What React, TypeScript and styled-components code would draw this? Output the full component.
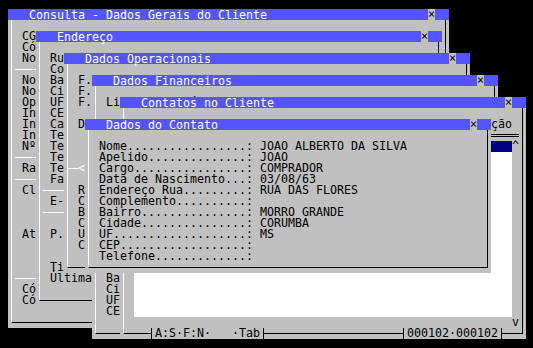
import * as React from "react";
import styled, { createGlobalStyle } from "styled-components";

// text-mode screen: every cell is 7px wide and 11px tall
const GlobalStyle = createGlobalStyle`
  *, *::before, *::after {
    box-sizing: border-box;
  }
  html, body {
    margin: 0;
    padding: 0;
    background: #000;
  }
`;

const Screen = styled.div`
  position: relative;
  width: 533px;
  height: 348px;
  overflow: hidden;
  background: #000;
  color: #000;
  font: 11.63px/11px "DejaVu Sans Mono", "Liberation Mono", monospace;
  white-space: pre;
`;

const WindowBox = styled.div<{ $col: number; $row: number; $cols: number; $rows: number }>`
  position: absolute;
  left: ${(p) => 8 + p.$col * 7}px;
  top: ${(p) => 9 + p.$row * 11}px;
  width: ${(p) => p.$cols * 7}px;
  height: ${(p) => p.$rows * 11}px;
  display: flex;
  flex-direction: column;
  overflow: hidden;
  background: #c0c0c0;
`;

const TitleBar = styled.div`
  display: flex;
  flex: none;
  height: 11px;
  padding: 0 14px 0 21px;
  background: #5555ff;
  color: #fff;
`;

const TitleText = styled.div`
  flex: 1;
  height: 11px;
  padding-top: 1px;
`;

const CloseBox = styled.div`
  width: 7px;
  background: #c0c0c0;
  color: #000;
  text-align: center;
`;

const Body = styled.div`
  flex: 1;
  display: flex;
  flex-direction: column;
  padding: 0 3px 5px;
`;

const Frame = styled.div`
  flex: 1;
  display: flex;
  flex-direction: column;
  padding-left: 3px;
  border-left: 1px solid #fff;
  border-right: 1px solid #000;
  border-bottom: 1px solid #000;
`;

const Line = styled.div<{ $indent?: number }>`
  flex: none;
  height: 11px;
  padding-left: ${(p) => (p.$indent ?? 1) * 7}px;
`;

const Gap = styled.div<{ $rows: number }>`
  flex: none;
  height: ${(p) => p.$rows * 11}px;
`;

const Rule = styled.div`
  flex: none;
  height: 11px;
  background: linear-gradient(#fff, #fff) 0 5px / 100% 1px no-repeat;
`;

const Marker = styled.div`
  flex: none;
  display: flex;
  align-items: center;
  height: 11px;
  margin-left: -3px;
  color: #fff;
  &::before {
    content: "";
    width: 10px;
    height: 1px;
    background: #fff;
  }
`;

const DoubleRule = styled.div`
  flex: none;
  height: 11px;
  padding-top: 4px;
  &::before {
    content: "";
    display: block;
    width: 392px;
    height: 3px;
    border-top: 1px solid #000;
    border-bottom: 1px solid #000;
  }
`;

const ListArea = styled.div`
  flex: none;
  display: flex;
  height: 187px;
  padding-left: 7px;
`;

const List = styled.div`
  width: 378px;
  height: 176px;
  background: #fff;
`;

const SelectedRow = styled.div`
  height: 11px;
  background: #000080;
`;

const ScrollBar = styled.div`
  width: 7px;
  display: flex;
  flex-direction: column;
  justify-content: space-between;
  text-align: center;
`;

const StatusRow = styled.div`
  flex: none;
  display: flex;
  height: 11px;
  margin-top: auto;
  margin-bottom: -6px;
`;

const StatusLabel = styled.div<{ $gap: number }>`
  margin-left: ${(p) => p.$gap}px;
  padding: 0 3px;
  border-left: 1px solid #000;
  border-right: 1px solid #000;
  background: #c0c0c0;
`;

const FieldRow = styled(Line)`
  display: flex;
`;

const FieldLabel = styled.span`
  width: 161px;
`;

type WinProps = {
  title: string;
  col: number;
  row: number;
  cols?: number;
  rows: number;
  children?: React.ReactNode;
};

const Win = ({ title, col, row, cols = 58, rows, children }: WinProps) => (
  <WindowBox $col={col} $row={row} $cols={cols} $rows={rows}>
    <TitleBar>
      <TitleText>{title}</TitleText>
      <CloseBox>×</CloseBox>
    </TitleBar>
    <Body>
      <Frame>{children}</Frame>
    </Body>
  </WindowBox>
);

const contactFields: [string, string][] = [
  ["Nome", "JOAO ALBERTO DA SILVA"],
  ["Apelido", "JOAO"],
  ["Cargo", "COMPRADOR"],
  ["Data de Nascimento", "03/08/63"],
  ["Endereço Rua", "RUA DAS FLORES"],
  ["Complemento", ""],
  ["Bairro", "MORRO GRANDE"],
  ["Cidade", "CORUMBA"],
  ["UF", "MS"],
  ["CEP", ""],
  ["Telefone", ""],
];

const App = () => {
  return (
    <Screen>
      <GlobalStyle />

      <Win title="Consulta - Dados Gerais do Cliente" col={0} row={0} cols={63} rows={29}>
        <Gap $rows={1} />
        <Line>CGC/CPF</Line>
        <Line>Código</Line>
        <Line>Nome</Line>
        <Rule />
        <Line>Nome Fantasia</Line>
        <Line>Nome Reduzido</Line>
        <Line>Operador</Line>
        <Line>Inscrição Estadual</Line>
        <Line>Inscrição Municipal</Line>
        <Line>Inclusão</Line>
        <Line>Nº Funcionários</Line>
        <Rule />
        <Line>Ramo de Atividade</Line>
        <Rule />
        <Line>Classificação</Line>
        <Gap $rows={3} />
        <Line>Atualização</Line>
        <Gap $rows={3} />
        <Rule />
        <Line>Cód. Vendedor</Line>
        <Line>Cód. Cobrador</Line>
      </Win>

      <Win title="Endereço" col={4} row={2} rows={25}>
        <Gap $rows={1} />
        <Line>Rua</Line>
        <Line>Complemento</Line>
        <Line>Bairro</Line>
        <Line>Cidade</Line>
        <Line>UF</Line>
        <Line>CEP</Line>
        <Line>Caixa Postal</Line>
        <Line>Telefone 1</Line>
        <Line>Telefone 2</Line>
        <Line>Telefone 3</Line>
        <Line>Telex</Line>
        <Line>Fax</Line>
        <Rule />
        <Line>E-mail</Line>
        <Rule />
        <Gap $rows={1} />
        <Line>P. Referência</Line>
        <Gap $rows={2} />
        <Line>Titular</Line>
        <Line>Última Alteração</Line>
      </Win>

      <Win title="Dados Operacionais" col={8} row={4} rows={20}>
        <Gap $rows={1} />
        <Line>F. Pagamento</Line>
        <Line>F. Entrega</Line>
        <Line>F. Cobrança</Line>
        <Gap $rows={1} />
        <Line>Desconto</Line>
        <Gap $rows={3} />
        <Marker>{"<"}</Marker>
        <Gap $rows={1} />
        <Line>Rua</Line>
        <Line>Complemento</Line>
        <Line>Bairro</Line>
        <Line>Cidade</Line>
        <Line>UF</Line>
        <Line>CEP</Line>
      </Win>

      <Win title="Dados Financeiros" col={12} row={6} rows={24}>
        <Gap $rows={1} />
        <Line>Limite de Crédito</Line>
        <Gap $rows={15} />
        <Line>Bairro</Line>
        <Line>Cidade</Line>
        <Line>UF</Line>
        <Line>CEP</Line>
      </Win>

      <Win title="Contatos no Cliente" col={16} row={8} rows={22}>
        <Gap $rows={1} />
        <Line>{"Nome".padEnd(48) + "Função"}</Line>
        <DoubleRule />
        <ListArea>
          <List>
            <SelectedRow />
          </List>
          <ScrollBar>
            <span>^</span>
            <span>v</span>
          </ScrollBar>
        </ListArea>
        <StatusRow>
          <StatusLabel $gap={24}>{"A:S·F:N·   ·Tab"}</StatusLabel>
          <StatusLabel $gap={139}>000102·000102</StatusLabel>
        </StatusRow>
      </Win>

      <Win title="Dados do Contato" col={11} row={10} rows={14}>
        <Gap $rows={1} />
        {contactFields.map(([label, value]) => (
          <FieldRow key={label}>
            <FieldLabel>{label.padEnd(21, ".") + ":"}</FieldLabel>
            <span>{value}</span>
          </FieldRow>
        ))}
      </Win>
    </Screen>
  );
};

export default App;
